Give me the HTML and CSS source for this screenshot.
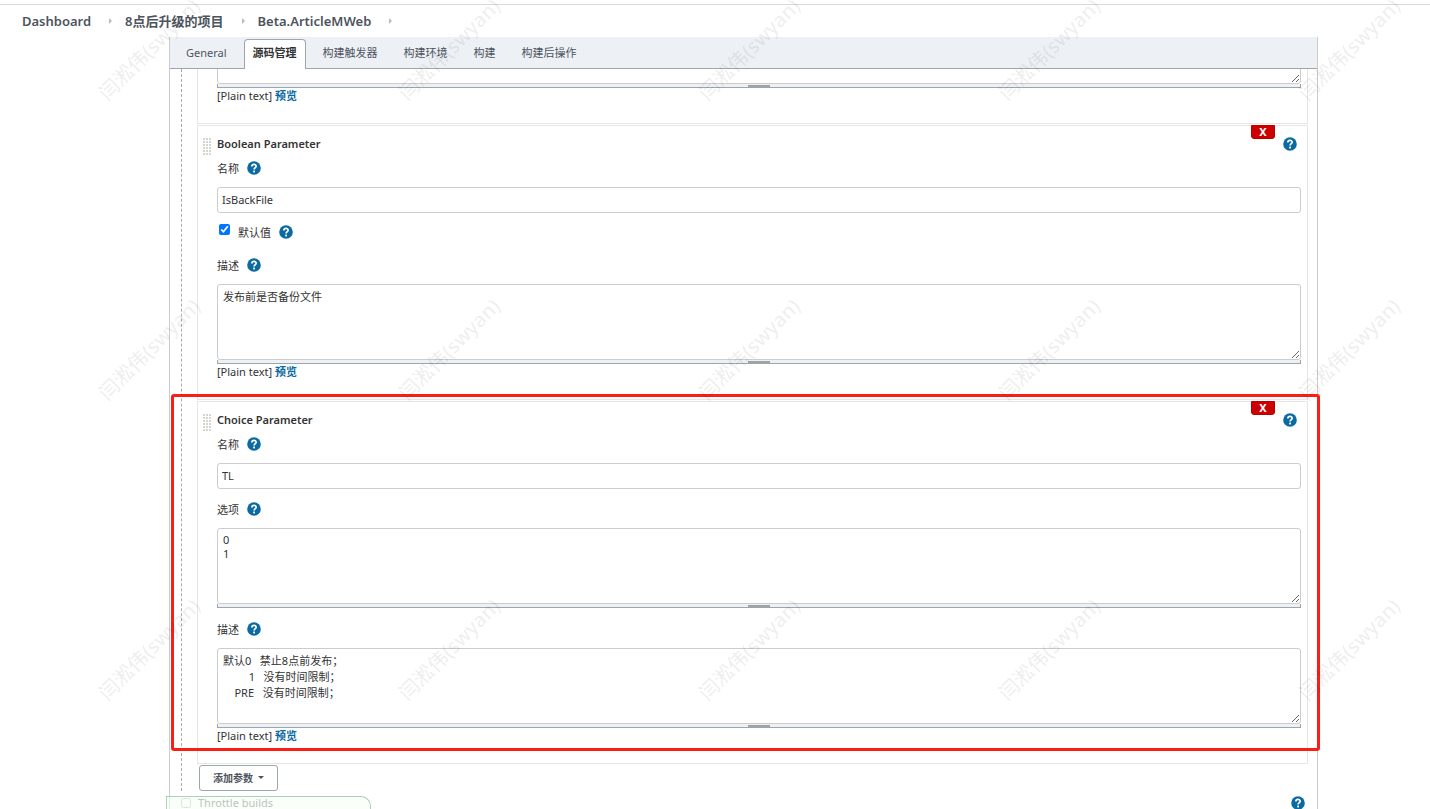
FILE: index.html
```html
<!DOCTYPE html>
<html lang="zh-CN">
<head>
    <meta charset="UTF-8">
    <meta name="viewport" content="width=device-width, initial-scale=1.0">
    <title>Beta.ArticleMWeb Config [Jenkins]</title>
    <link rel="stylesheet" href="styles.css">
</head>
<body>

    <!-- shared icons -->
    <svg class="sprite" aria-hidden="true">
        <symbol id="icon-help" viewBox="0 0 14 14">
            <circle cx="7" cy="7" r="6.8" fill="#0b6aa2"/>
            <path d="M4.9 5.4C4.9 2.7 9.2 2.8 9.2 5.2C9.2 6.7 7.1 6.7 7.1 8.6" fill="none" stroke="#fff" stroke-width="1.7"/>
            <rect x="6.2" y="9.6" width="1.8" height="1.8" fill="#fff"/>
        </symbol>
    </svg>

    <nav class="breadcrumbs">
        <a href="#">Dashboard</a>
        <i class="arrow"></i>
        <a href="#">8点后升级的项目</a>
        <i class="arrow"></i>
        <a href="#">Beta.ArticleMWeb</a>
        <i class="arrow"></i>
    </nav>

    <main class="config">
        <div class="tab-bar">
            <a class="tab" href="#">General</a>
            <a class="tab active" href="#">源码管理</a>
            <a class="tab" href="#">构建触发器</a>
            <a class="tab" href="#">构建环境</a>
            <a class="tab" href="#">构建</a>
            <a class="tab" href="#">构建后操作</a>
        </div>

        <form class="config-body">
            <div class="params">

                <!-- previous parameter, scrolled under the tab bar -->
                <section class="param scrolled">
                    <div class="param-body">
                        <textarea class="text-area" aria-label="描述"></textarea>
                        <div class="text-handle"></div>
                        <p class="preview">[Plain text] <a href="#">预览</a></p>
                    </div>
                </section>

                <section class="param">
                    <div class="grip"></div>
                    <div class="param-body">
                        <div class="param-title">
                            <b>Boolean Parameter</b>
                            <button type="button" class="help" aria-label="Help"><svg><use href="#icon-help"/></svg></button>
                        </div>
                        <div class="field-label">
                            <label for="bool-name">名称</label>
                            <button type="button" class="help" aria-label="Help"><svg><use href="#icon-help"/></svg></button>
                        </div>
                        <input class="text-input" id="bool-name" type="text" value="IsBackFile">
                        <div class="check-row">
                            <input id="bool-default" type="checkbox" checked>
                            <label for="bool-default">默认值</label>
                            <button type="button" class="help" aria-label="Help"><svg><use href="#icon-help"/></svg></button>
                        </div>
                        <div class="field-label">
                            <label for="bool-desc">描述</label>
                            <button type="button" class="help" aria-label="Help"><svg><use href="#icon-help"/></svg></button>
                        </div>
                        <textarea class="text-area" id="bool-desc">发布前是否备份文件</textarea>
                        <div class="text-handle"></div>
                        <p class="preview">[Plain text] <a href="#">预览</a></p>
                    </div>
                    <button type="button" class="delete">X</button>
                </section>

                <section class="param">
                    <div class="grip"></div>
                    <div class="param-body">
                        <div class="param-title">
                            <b>Choice Parameter</b>
                            <button type="button" class="help" aria-label="Help"><svg><use href="#icon-help"/></svg></button>
                        </div>
                        <div class="field-label">
                            <label for="choice-name">名称</label>
                            <button type="button" class="help" aria-label="Help"><svg><use href="#icon-help"/></svg></button>
                        </div>
                        <input class="text-input" id="choice-name" type="text" value="TL">
                        <div class="field-label">
                            <label for="choice-options">选项</label>
                            <button type="button" class="help" aria-label="Help"><svg><use href="#icon-help"/></svg></button>
                        </div>
                        <textarea class="text-area compact" id="choice-options">0
1</textarea>
                        <div class="text-handle"></div>
                        <div class="field-label">
                            <label for="choice-desc">描述</label>
                            <button type="button" class="help" aria-label="Help"><svg><use href="#icon-help"/></svg></button>
                        </div>
                        <textarea class="text-area" id="choice-desc">默认0   禁止8点前发布；
         1   没有时间限制；
    PRE   没有时间限制；</textarea>
                        <div class="text-handle"></div>
                        <p class="preview">[Plain text] <a href="#">预览</a></p>
                    </div>
                    <button type="button" class="delete">X</button>
                    <div class="highlight"></div>
                </section>

                <button type="button" class="add-param">添加参数 <i class="caret"></i></button>
            </div>

            <div class="option-row">
                <input id="throttle" type="checkbox">
                <label for="throttle">Throttle builds</label>
                <button type="button" class="help" aria-label="Help"><svg><use href="#icon-help"/></svg></button>
            </div>
        </form>
    </main>

    <div class="save-bar"></div>

    <div class="watermark" aria-hidden="true">
        <span>闫淞伟(swyan)</span><span>闫淞伟(swyan)</span><span>闫淞伟(swyan)</span><span>闫淞伟(swyan)</span><span>闫淞伟(swyan)</span>
        <span>闫淞伟(swyan)</span><span>闫淞伟(swyan)</span><span>闫淞伟(swyan)</span><span>闫淞伟(swyan)</span><span>闫淞伟(swyan)</span>
        <span>闫淞伟(swyan)</span><span>闫淞伟(swyan)</span><span>闫淞伟(swyan)</span><span>闫淞伟(swyan)</span><span>闫淞伟(swyan)</span>
    </div>

</body>
</html>
```
FILE: styles.css
```css
* {
    box-sizing: border-box;
}

body {
    margin: 0;
    padding-top: 4px;
    height: 100vh;
    overflow: hidden;
    position: relative;
    font-family: "Noto Sans", "Noto Sans CJK SC", sans-serif;
    font-size: 11px;
    color: #333;
    background-color: #fff;
}

a {
    text-decoration: none;
}

b {
    font-weight: 600;
}

input, textarea, button {
    font: inherit;
    color: inherit;
}

.sprite {
    display: none;
}

/* Breadcrumbs */
.breadcrumbs {
    display: flex;
    align-items: center;
    height: 33px;
    padding-left: 22px;
    border-top: 1px solid #d3dbdb;
    font-size: 13px;
    font-weight: 600;
}

.breadcrumbs a {
    line-height: 18px;
    color: #4d545d;
}

.arrow {
    margin: 0 13px 0 18px;
    border: 3px solid transparent;
    border-left: 3px solid #bbb;
    border-right: 0;
}

/* Config panel */
.config {
    margin: 0 112px 0 169px;
    border: 1px solid #ccc;
    border-top: 0;
}

.tab-bar {
    display: flex;
    align-items: flex-end;
    gap: 8px;
    height: 32px;
    padding-left: 7px;
    background-color: #edf1f6;
    border-bottom: 1px solid #9aa8ae;
}

.tab {
    height: 30px;
    margin-bottom: -1px;
    padding: 0 8px;
    border: 1px solid transparent;
    border-bottom: 0;
    line-height: 26px;
    color: #4d545d;
}

.tab.active {
    background-color: #fff;
    border-color: #9aa8ae;
    border-radius: 4px 4px 0 0;
    font-weight: 700;
    color: #333;
}

.config-body {
    padding: 0 9px 0 11px;
    clip-path: inset(0 -12px);
}

.params {
    display: flex;
    flex-direction: column;
    align-items: stretch;
    gap: 1px;
    padding-left: 15px;
    border-left: 1px dashed #aaa;
}

/* Parameter block */
.param {
    position: relative;
    display: flex;
    padding: 0 6px 19px 0;
    border: 1px solid #e6e6e6;
}

.param.scrolled {
    margin-top: -62px;
    padding-left: 19px;
}

.grip {
    flex: none;
    width: 9px;
    height: 18px;
    margin: 11px 6px 0 4px;
    background-image:
        linear-gradient(#fff 1px, transparent 1px),
        linear-gradient(90deg, #fff 1px, #d4d6cf 1px);
    background-size: 3px 3px;
}

.param-body {
    flex: 1;
    display: flex;
    flex-direction: column;
}

.param-title {
    display: flex;
    justify-content: space-between;
    align-items: center;
    height: 20px;
    margin-top: 8px;
    padding-right: 4px;
    line-height: 14px;
}

.field-label {
    display: flex;
    align-items: center;
    gap: 8px;
    height: 28px;
    margin-bottom: 5px;
}

.check-row {
    display: flex;
    align-items: center;
    gap: 8px;
    height: 26px;
    margin-bottom: 6px;
}

.check-row input {
    width: 11px;
    height: 11px;
    margin: 0 0 5px 2px;
}

.help {
    width: 14px;
    height: 14px;
    padding: 0;
    border: 0;
    background: none;
    cursor: pointer;
}

.help svg {
    display: block;
    width: 14px;
    height: 14px;
}

.text-input {
    height: 26px;
    margin-bottom: 6px;
    padding: 0 4px 2px;
    border: 1px solid #ccc;
    border-radius: 3px;
}

.text-area {
    display: block;
    height: 76px;
    padding: 4px 5px;
    border: 1px solid #ccc;
    border-radius: 3px;
    line-height: 16px;
    resize: vertical;
}

.text-area.compact {
    line-height: 14px;
}

.text-handle {
    height: 4px;
    background: linear-gradient(#a0a3a5, #a0a3a5) center bottom / 22px 2px no-repeat #edf1f6;
    border: 1px solid #9aa8ae;
    border-top: 0;
}

.text-handle + .field-label {
    margin-top: 7px;
}

.preview {
    margin: 0;
    line-height: 16px;
}

.preview a {
    color: #0b6aa2;
    font-weight: 700;
}

.delete {
    position: absolute;
    top: -1px;
    right: 32px;
    width: 24px;
    height: 14px;
    padding: 0;
    border: 1px solid #b00;
    border-radius: 0 0 3px 3px;
    background-color: #c00;
    color: #fff;
    font-weight: 700;
    line-height: 12px;
}

/* Red frame around the choice parameter */
.highlight {
    position: absolute;
    inset: -8px -13px 12px -27px;
    border: 3px solid #fd1d14;
    border-radius: 3px;
    pointer-events: none;
}

.add-param {
    align-self: flex-start;
    display: flex;
    align-items: center;
    gap: 5px;
    height: 26px;
    margin-left: 2px;
    padding: 0 13px 2px;
    border: 1px solid #9aa8ae;
    border-radius: 3px;
    background-color: #fff;
    color: #4d545d;
    font-size: 10px;
    font-weight: 700;
}

.caret {
    border: 3px solid transparent;
    border-top-color: #4d545d;
    border-bottom: 0;
}

.option-row {
    display: flex;
    align-items: center;
    height: 24px;
    color: #666;
}

.option-row input {
    width: 10px;
    height: 10px;
    margin: 0 7px 0 0;
    opacity: 0.5;
}

.option-row label {
    line-height: 12px;
}

.option-row .help {
    margin-left: auto;
    margin-right: 3px;
}

.save-bar {
    position: absolute;
    left: 166px;
    bottom: 0;
    width: 205px;
    height: 13px;
    border: 1px solid #a9d3b9;
    border-bottom: 0;
    border-radius: 0 10px 0 0;
    background-color: rgba(246, 255, 246, 0.6);
}

/* Watermark laid over the whole window */
.watermark {
    position: absolute;
    inset: -102px 0 0 -2px;
    display: grid;
    grid-template-columns: repeat(5, 300px);
    grid-auto-rows: 300px;
    place-items: center;
    pointer-events: none;
    font-size: 20px;
    font-weight: 500;
    color: rgba(0, 0, 0, 0.08);
}

.watermark span {
    transform: rotate(-45deg);
    white-space: nowrap;
}
```
